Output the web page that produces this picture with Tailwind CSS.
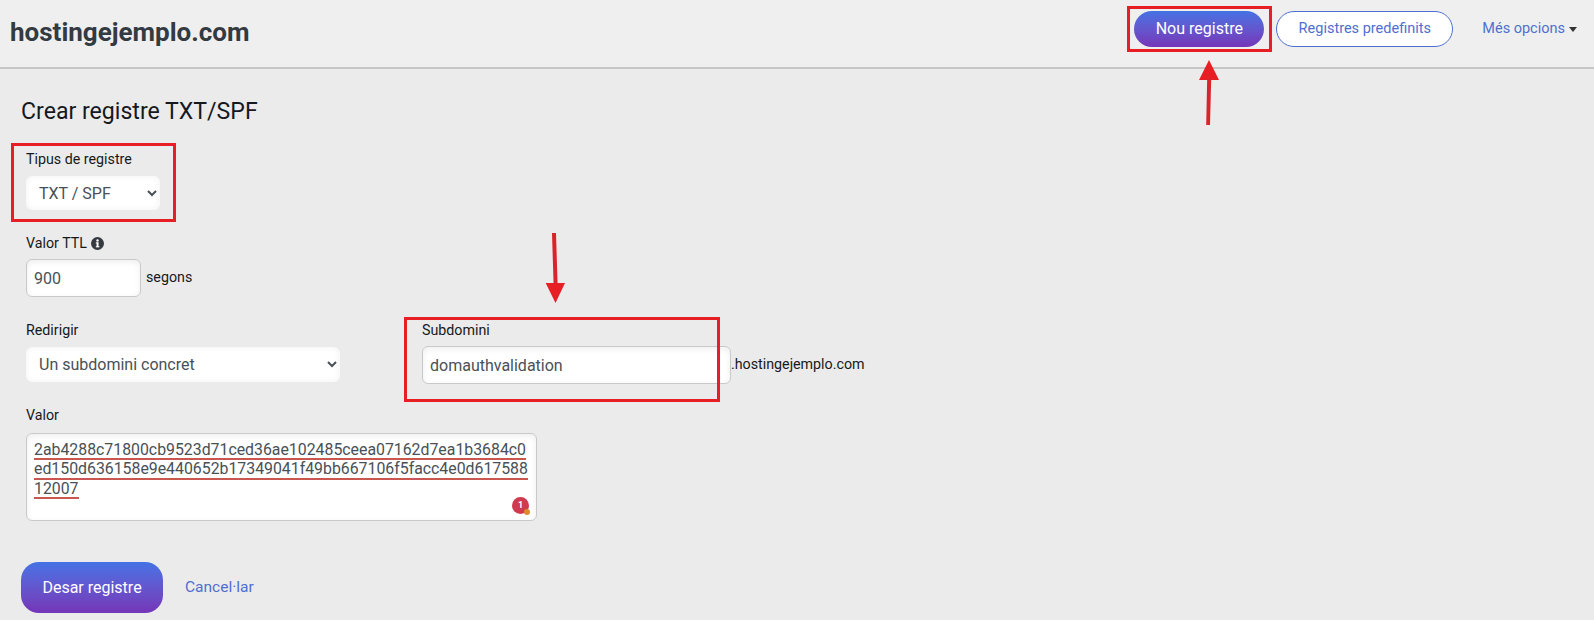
<!DOCTYPE html>
<html lang="ca">
<head>
<meta charset="utf-8">
<title>hostingejemplo.com</title>
<script src="https://cdn.jsdelivr.net/npm/@tailwindcss/browser@4"></script>
</head>
<body class="relative h-[620px] w-[1594px] overflow-hidden bg-[#ebebeb] font-['Roboto',sans-serif] text-[#16191c]">
<header class="flex h-[69px] items-center justify-between border-b-2 border-[#c6c6c6] bg-[#efefef] pb-[10px] pl-[10px] pr-[17px]">
  <h1 class="mt-[6px] text-[26px] leading-none font-bold text-[#333a41]">hostingejemplo.com</h1>
  <nav class="flex items-center">
    <button class="h-[36px] w-[130px] rounded-full bg-gradient-to-b from-[#4272e4] to-[#7435b8] text-[16px] text-white">Nou registre</button>
    <button class="ml-3 h-[36px] w-[177px] rounded-full border border-[#4f6fd0] bg-white text-[14.5px] text-[#4f6fd0]">Registres predefinits</button>
    <a class="ml-[29px] flex items-center text-[14.5px] text-[#4f6fd0]">Més opcions<span class="ml-[4px] mt-[1px] h-0 w-0 border-x-[4px] border-t-[5px] border-x-transparent border-t-[#333]"></span></a>
  </nav>
</header>

<main class="pl-[26px]">
  <h2 class="-ml-[5px] mt-[30px] text-[23.1px] leading-[26px] text-[#15191d]">Crear registre TXT/SPF</h2>

  <label class="mt-[26px] block text-[14.25px] leading-[16px]">Tipus de registre</label>
  <select class="mt-[9px] block h-[34px] w-[134px] rounded-[6px] bg-white pl-[9px] text-[16px] text-[#495057] shadow-[inset_0_0_6px_rgba(0,0,0,0.06)]"><option>TXT / SPF</option></select>

  <div class="mt-[25px] flex items-center text-[14.25px] leading-[16px]">Valor TTL
    <svg class="ml-[4px]" width="13" height="13" viewBox="0 0 13 13"><circle cx="6.5" cy="6.5" r="6.5" fill="#343a40"/><rect x="5.6" y="5.5" width="1.9" height="4.6" fill="#fff"/><rect x="4.8" y="5.4" width="2.6" height="1.1" fill="#fff"/><rect x="4.8" y="9.2" width="3.6" height="1.1" fill="#fff"/><circle cx="6.5" cy="3.5" r="1.2" fill="#fff"/></svg>
  </div>
  <div class="mt-[8px] flex items-center">
    <input value="900" class="h-[38px] w-[115px] rounded-[6px] border border-[#c9c9c9] bg-white px-[7px] text-[16px] text-[#495057] shadow-[inset_0_2px_6px_rgba(0,0,0,0.07)]">
    <span class="ml-[5px] -mt-[1px] text-[14.25px]">segons</span>
  </div>

  <div class="mt-[25px] flex items-start">
    <div>
      <label class="block text-[14.25px] leading-[16px]">Redirigir</label>
      <select class="mt-[9px] block h-[35px] w-[314px] rounded-[6px] bg-white pl-[9px] text-[16px] text-[#495057] shadow-[inset_0_0_6px_rgba(0,0,0,0.06)]"><option>Un subdomini concret</option></select>
    </div>
    <div class="ml-[82px]">
      <label class="block text-[14.25px] leading-[16px]">Subdomini</label>
      <div class="mt-[8px] flex items-center">
        <input value="domauthvalidation" class="h-[38px] w-[309px] rounded-[6px] border border-[#c9c9c9] bg-white px-[7px] text-[16px] text-[#495057] shadow-[inset_0_2px_6px_rgba(0,0,0,0.07)]">
        <span class="-mt-[1px] text-[14.25px]">.hostingejemplo.com</span>
      </div>
    </div>
  </div>

  <label class="mt-[23px] block text-[14.25px] leading-[16px]">Valor</label>
  <div class="relative mt-[10px] h-[88px] w-[511px] rounded-[6px] border border-[#c9c9c9] bg-white px-[7px] pt-[7px] text-[15.85px] whitespace-nowrap text-[#495057] shadow-[inset_0_2px_6px_rgba(0,0,0,0.07)]">
    <div class="w-fit border-b-2 border-[#c9574f] leading-[17.3px]">2ab4288c71800cb9523d71ced36ae102485ceea07162d7ea1b3684c0</div>
    <div class="w-fit border-b-2 border-[#c9574f] leading-[17.3px]">ed150d636158e9e440652b17349041f49bb667106f5facc4e0d617588</div>
    <div class="w-fit border-b-2 border-[#c9574f] leading-[17.3px]">12007</div>
    <span class="absolute bottom-[6px] right-[7px] flex h-[17px] w-[17px] items-center justify-center rounded-full bg-[#cf3a50] text-[9px] font-bold text-white">1<span class="absolute -bottom-[1px] -right-[1px] h-[6px] w-[6px] rounded-full bg-[#e08a2e]"></span></span>
  </div>

  <div class="-ml-[5px] mt-[41px] flex items-center">
    <button class="h-[51px] w-[142px] rounded-[18px] bg-gradient-to-b from-[#4272e4] to-[#7435b8] text-[16px] text-white">Desar registre</button>
    <a class="ml-[22px] text-[15.5px] text-[#4f6fd0]">Cancel·lar</a>
  </div>
</main>

<!-- red annotations on top of the screenshot -->
<div class="absolute left-[1127px] top-[6px] h-[46px] w-[145px] border-[3px] border-[#e71f25]"></div>
<div class="absolute left-[11px] top-[143px] h-[79px] w-[165px] border-[3px] border-[#e71f25]"></div>
<div class="absolute left-[404px] top-[317px] h-[85px] w-[316px] border-[3px] border-[#e71f25]"></div>
<svg class="absolute left-[1195px] top-[58px]" width="28" height="70" viewBox="0 0 28 70"><path d="M14 2 L24 22 L4 22 Z" fill="#e71f25"/><path d="M12.2 20 L16.2 20 L15 67 L11.2 67 Z" fill="#d9242b"/></svg>
<svg class="absolute left-[540px] top-[230px]" width="30" height="76" viewBox="0 0 30 76"><path d="M12 3 L16 3 L17.6 55 L13.6 55 Z" fill="#d9242b"/><path d="M5.7 53 L25 53 L15.5 73 Z" fill="#e71f25"/></svg>
</body>
</html>
